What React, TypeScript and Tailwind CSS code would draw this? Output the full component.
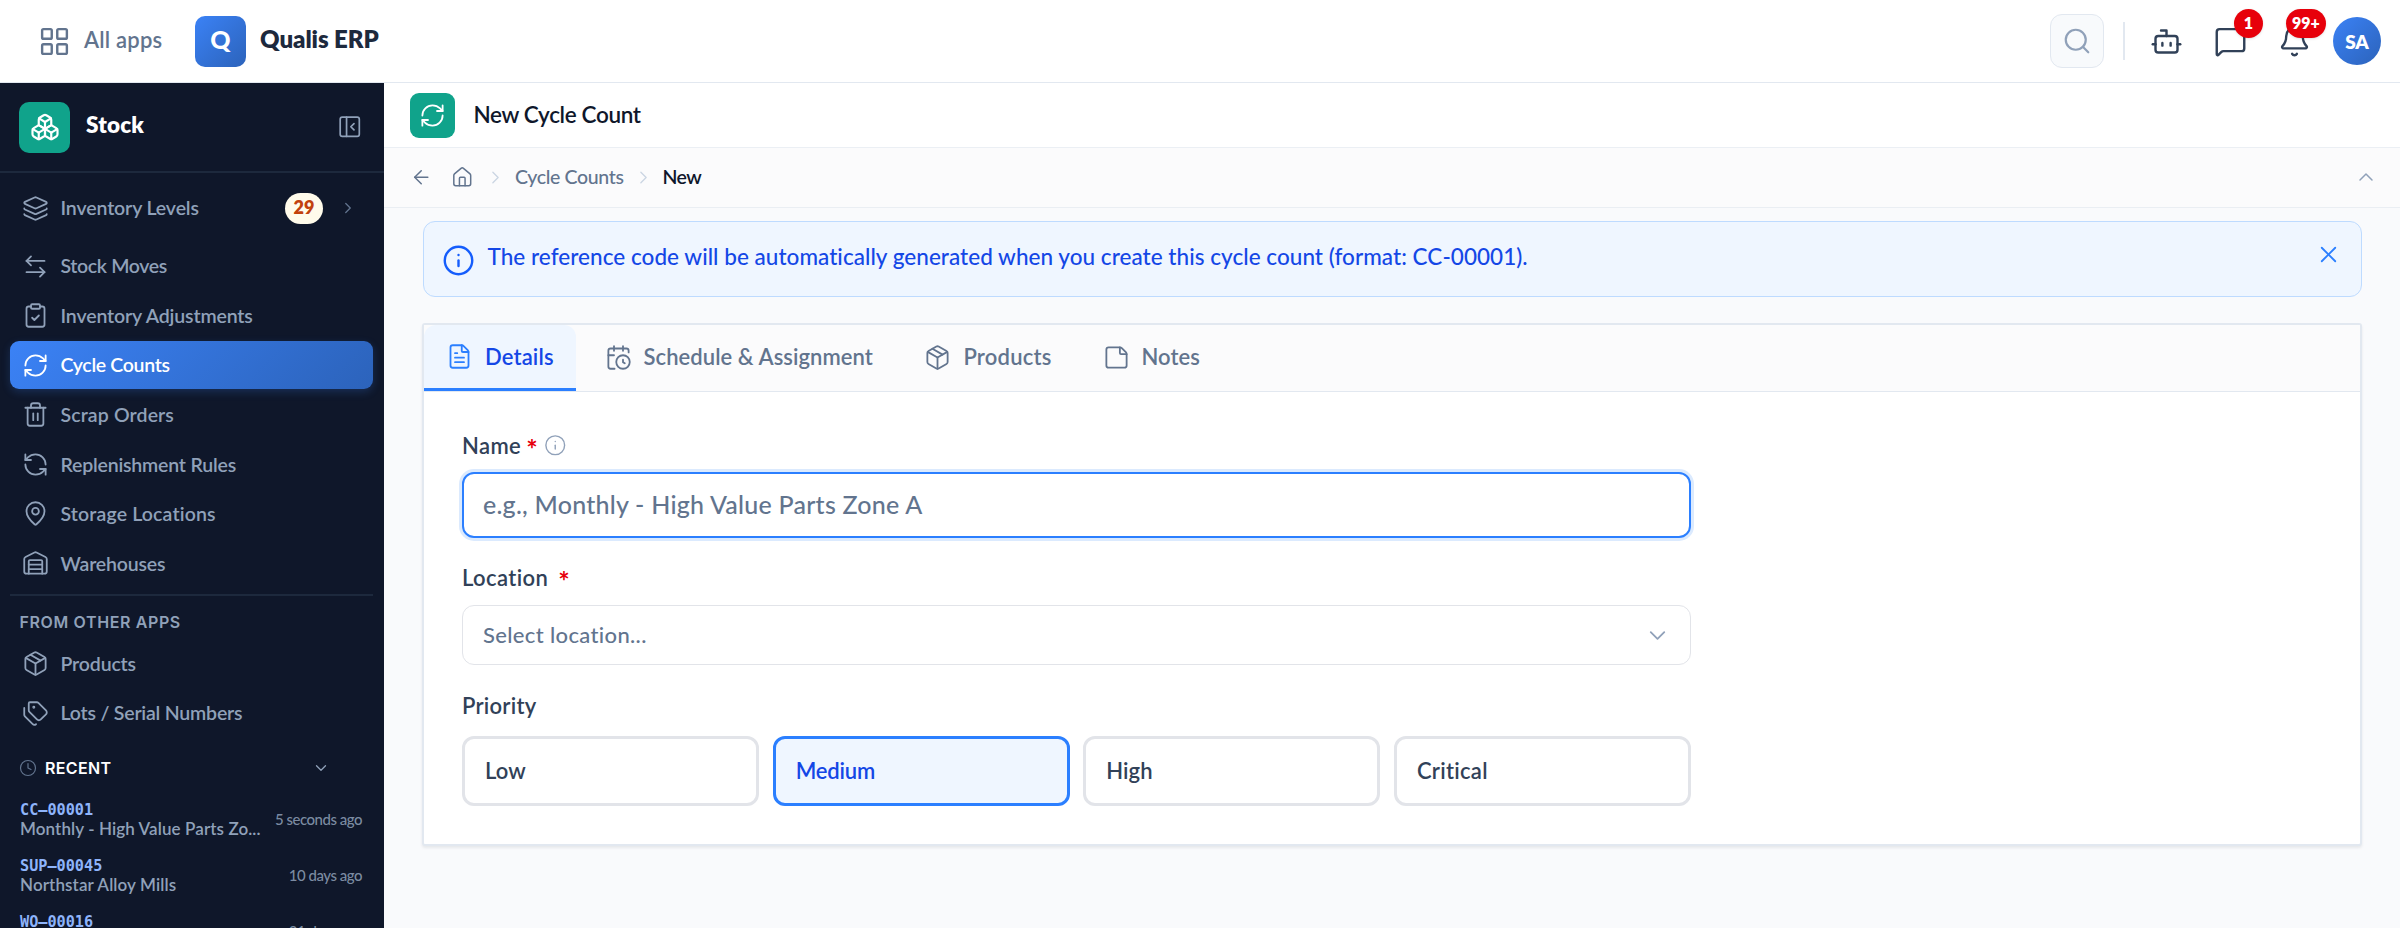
import type { ReactNode } from "react";
import {
  ArrowLeft, ArrowLeftRight, Bell, Bot, Boxes, CalendarClock, ChevronDown, ChevronRight, ChevronUp,
  ClipboardCheck, Clock, FileText, House, Info, Layers, LayoutGrid, MapPin, MessageSquare, Package,
  PanelLeftClose, RefreshCcw, RefreshCw, Search, StickyNote, Tags, Trash2, Warehouse, X,
  type LucideIcon,
} from "lucide-react";

type NavEntry = { icon: LucideIcon; label: string; tracking: string; active?: boolean };

const mainNav: NavEntry[] = [
  { icon: ArrowLeftRight, label: "Stock Moves", tracking: "tracking-[-0.35px]" },
  { icon: ClipboardCheck, label: "Inventory Adjustments", tracking: "tracking-[-0.14px]" },
  { icon: RefreshCw, label: "Cycle Counts", tracking: "tracking-[-0.33px]", active: true },
  { icon: Trash2, label: "Scrap Orders", tracking: "tracking-[0.12px]" },
  { icon: RefreshCcw, label: "Replenishment Rules", tracking: "tracking-[-0.2px]" },
  { icon: MapPin, label: "Storage Locations", tracking: "tracking-[0.15px]" },
  { icon: Warehouse, label: "Warehouses", tracking: "tracking-[-0.18px]" },
];

const otherNav: NavEntry[] = [
  { icon: Package, label: "Products", tracking: "tracking-[-0.15px]" },
  { icon: Tags, label: "Lots / Serial Numbers", tracking: "tracking-[-0.2px]" },
];

const recent = [
  { code: "CC–00001", name: "Monthly - High Value Parts Zo...", time: "5 seconds ago", tracking: "tracking-[0.1px]" },
  { code: "SUP–00045", name: "Northstar Alloy Mills", time: "10 days ago", tracking: "tracking-[0.11px]" },
  { code: "WO–00016", time: "21 days ago" },
];

const priorities = [
  { label: "Low", tracking: "tracking-[0.1px]" },
  { label: "Medium", tracking: "tracking-[-0.15px]", active: true },
  { label: "High", tracking: "tracking-[0.1px]" },
  { label: "Critical", tracking: "tracking-[0.3px]" },
];

function NavItem({ icon: Icon, label, tracking, active }: NavEntry) {
  return (
    <a
      className={
        active
          ? "flex h-12 items-center gap-3 rounded-[9px] bg-linear-135 from-[#3b82f6] to-[#2c63bb] pl-3 text-white shadow-[0_3px_9px_rgba(59,130,246,0.22)]"
          : "flex h-12 items-center gap-3 rounded-[9px] pl-3 text-slate-400"
      }
    >
      <Icon size={27} strokeWidth={1.6} />
      <span className={`text-[19.5px] leading-none font-semibold ${tracking}`}>{label}</span>
    </a>
  );
}

function Badge({ children, place }: { children: ReactNode; place: string }) {
  return (
    <span
      className={`absolute flex h-[29px] min-w-[29px] items-center justify-center rounded-full bg-[#e7000b] px-1.5 pb-px text-[16px] leading-none font-extrabold text-white shadow-sm ${place}`}
    >
      {children}
    </span>
  );
}

function TopBar() {
  return (
    <header className="flex h-[83px] shrink-0 items-center justify-between border-b border-slate-200 bg-white pr-[19px] pl-[38px]">
      <div className="flex items-center">
        <LayoutGrid size={33} strokeWidth={1.75} className="text-slate-500" />
        <span className="ml-[13px] w-[111px] pb-0.5 text-[22px] leading-none font-semibold tracking-[0.2px] text-slate-500">All apps</span>
        <div className="flex size-[51px] items-center justify-center rounded-[10px] bg-linear-135 from-[#3b82f6] to-[#2c63bb] pb-1 text-[25px] leading-none font-black text-white">
          Q
        </div>
        <span className="ml-[14px] pb-1 text-[24px] leading-none font-extrabold tracking-[-0.05px] text-slate-800">Qualis ERP</span>
      </div>
      <div className="flex items-center text-slate-700">
        <button className="flex size-[54px] items-center justify-center rounded-xl border-[1.5px] border-slate-200 bg-slate-50 text-slate-400">
          <Search size={30} strokeWidth={1.75} />
        </button>
        <div className="mr-[25px] ml-[19px] h-[38px] w-[2px] bg-slate-200" />
        <Bot size={33} strokeWidth={1.75} />
        <div className="relative ml-[31px]">
          <MessageSquare size={33} strokeWidth={1.75} />
          <Badge place="-top-[16px] left-[20px]">1</Badge>
        </div>
        <div className="relative ml-[31px]">
          <Bell size={33} strokeWidth={1.75} />
          <Badge place="-top-[16px] left-[8px]">99+</Badge>
        </div>
        <div className="ml-[22px] flex size-12 items-center justify-center rounded-full bg-linear-135 from-[#3b82f6] to-[#2c63bb] text-[19px] leading-none font-extrabold tracking-[-0.17px] text-white">
          SA
        </div>
      </div>
    </header>
  );
}

function Sidebar() {
  return (
    <aside className="flex w-96 shrink-0 flex-col overflow-hidden bg-[#0f172a]">
      <div className="flex h-[90px] shrink-0 items-center border-b-2 border-slate-800 pr-[22px] pl-[19px]">
        <div className="flex size-[51px] items-center justify-center rounded-[10px] bg-[#10a38b] text-white">
          <Boxes size={30} strokeWidth={1.75} />
        </div>
        <span className="ml-[16px] grow pb-[3px] text-[22.5px] leading-none font-extrabold tracking-[0.2px] text-white">Stock</span>
        <PanelLeftClose size={25.5} strokeWidth={1.6} className="text-slate-400" />
      </div>
      <nav className="flex flex-col pt-[11px] pr-[11px] pl-[9.5px]">
        <div className="mb-[10px] flex h-12 items-center pr-4 pl-3 text-slate-400">
          <Layers size={27} strokeWidth={1.6} />
          <span className="ml-3 grow text-[19.5px] leading-none font-semibold tracking-[-0.12px]">Inventory Levels</span>
          <span className="mr-[16px] flex h-[31px] w-[38px] items-center justify-center rounded-full bg-[#fffbeb] pb-0.5 text-[18px] leading-none font-extrabold text-[#c2410c]">
            29
          </span>
          <ChevronRight size={18} strokeWidth={1.75} className="text-slate-500" />
        </div>
        <div className="flex flex-col gap-[1.6px]">
          {mainNav.map((n) => <NavItem key={n.label} {...n} />)}
        </div>
        <div className="mt-[6px] h-[2px] bg-slate-800" />
        <div className="mt-[17px] mb-[8px] pl-[10px] font-[Inter,sans-serif] text-[16px] leading-[19px] font-semibold tracking-[0.62px] text-slate-400">
          FROM OTHER APPS
        </div>
        <div className="flex flex-col gap-[1.6px]">
          {otherNav.map((n) => <NavItem key={n.label} {...n} />)}
        </div>
      </nav>
      <div className="mt-[19px] flex h-[24px] shrink-0 items-center pr-[54px] pl-[19px]">
        <Clock size={18} strokeWidth={1.6} className="text-slate-500" />
        <span className="ml-[8px] grow font-[Inter,sans-serif] text-[16px] leading-none font-semibold tracking-[0.35px] text-white">RECENT</span>
        <ChevronDown size={18} strokeWidth={1.75} className="text-slate-400" />
      </div>
      <div className="mt-[21px] flex flex-col gap-[18px] pr-[22px] pl-[20px]">
        {recent.map((r) => (
          <div key={r.code} className="flex h-[38px] shrink-0 items-center justify-between">
            <div className="flex h-full flex-col">
              <span className="font-['DejaVu_Sans_Mono',monospace] text-[15.2px] leading-[19px] font-bold text-[#8eb4fb]">{r.code}</span>
              {r.name && (
                <span className={`text-[17px] leading-[18px] font-semibold whitespace-nowrap text-slate-400 ${r.tracking}`}>{r.name}</span>
              )}
            </div>
            <span className="pb-px text-[15px] leading-none font-medium tracking-[-0.49px] whitespace-nowrap text-slate-400/85">{r.time}</span>
          </div>
        ))}
      </div>
    </aside>
  );
}

function Tab({ icon: Icon, label, style }: { icon: LucideIcon; label: string; style: string }) {
  return (
    <div className={`flex items-center gap-[12px] pb-0.5 text-slate-500 ${style}`}>
      <Icon size={27} strokeWidth={1.6} />
      <span className="text-[22px] leading-none font-semibold">{label}</span>
    </div>
  );
}

function FormCard() {
  return (
    <section className="mt-[26px] mr-[38.5px] ml-[38px] h-[523px] rounded-[3px] border-2 border-slate-200 bg-white shadow-[0_2px_3px_rgba(15,23,42,0.08)]">
      <div className="flex h-[67px] border-b border-slate-200 bg-[#fbfbfc]">
        <div className="flex w-[152px] items-center gap-[12px] rounded-t-xl border-b-[3px] border-[#2b7fff] bg-[#eff6ff] pl-[22px] text-[#2b7fff]">
          <FileText size={27} strokeWidth={1.6} />
          <span className="text-[22px] leading-none font-semibold tracking-[0.15px] text-[#1447e6]">Details</span>
        </div>
        <Tab icon={CalendarClock} label="Schedule & Assignment" style="ml-[28.5px] tracking-[0.06px]" />
        <Tab icon={Package} label="Products" style="ml-[51.5px] tracking-[0.2px]" />
        <Tab icon={StickyNote} label="Notes" style="ml-[51px] tracking-[0.05px]" />
      </div>
      <div className="flex w-[1267px] flex-col pt-[41px] pl-[38px] text-slate-700">
        <div className="flex h-[25px] items-center">
          <span className="text-[22px] leading-none font-semibold tracking-[0.4px]">Name</span>
          <span className="ml-[5px] h-[22px] w-[12px] text-[27px] leading-[27px] font-bold text-[#e7000b]">*</span>
          <Info size={22.5} strokeWidth={1.5} className="ml-[6px] text-slate-400" />
        </div>
        <div className="mt-[14px] flex h-[66px] items-center rounded-xl border-2 border-[#2b7fff] bg-white pl-[19px] shadow-[0_0_0_3px_#dbeafe]">
          <span className="pb-0.5 text-[25px] leading-none font-medium tracking-[0.24px] text-slate-500">e.g., Monthly - High Value Parts Zone A</span>
        </div>
        <div className="mt-[28px] flex h-[24px] items-center">
          <span className="text-[22px] leading-none font-semibold tracking-[0.4px]">Location</span>
          <span className="ml-[10px] h-[22px] text-[27px] leading-[27px] font-bold text-[#e7000b]">*</span>
        </div>
        <div className="mt-[15px] flex h-[60px] items-center justify-between rounded-xl border border-[#e2e4e9] bg-white pr-[19px] pl-[20px]">
          <span className="text-[22px] leading-none font-medium tracking-[0.35px] text-slate-500">Select location...</span>
          <ChevronDown size={27} strokeWidth={1.6} className="text-slate-400" />
        </div>
        <div className="mt-[29px] flex h-[24px] items-center">
          <span className="text-[22px] leading-none font-semibold tracking-[0.25px]">Priority</span>
        </div>
        <div className="mt-[18px] grid grid-cols-4 gap-[13.5px]">
          {priorities.map((p) => (
            <button
              key={p.label}
              className={
                p.active
                  ? "flex h-[70px] items-center rounded-xl border-[3px] border-[#2b7fff] bg-[#eff6ff] pl-[20px] text-[#1447e6]"
                  : "flex h-[70px] items-center rounded-xl border-[3px] border-[#e2e4e9] bg-white pl-[20px]"
              }
            >
              <span className={`text-[22px] leading-none font-semibold ${p.tracking}`}>{p.label}</span>
            </button>
          ))}
        </div>
      </div>
    </section>
  );
}

function Content() {
  return (
    <main className="flex grow flex-col bg-[#f9fafc]">
      <div className="flex h-[65px] shrink-0 items-center border-b border-slate-200/70 bg-white pl-[25.5px]">
        <div className="flex size-[45px] items-center justify-center rounded-[9px] bg-[#10a38b] text-white">
          <RefreshCw size={27} strokeWidth={1.6} />
        </div>
        <h1 className="ml-[19px] text-[22.5px] leading-none font-semibold tracking-[-0.35px] text-slate-900">New Cycle Count</h1>
      </div>
      <div className="flex h-[60px] shrink-0 items-center border-b border-slate-200/70 bg-[#fbfbfc] pr-[22px] pb-px pl-[26px] text-slate-500">
        <ArrowLeft size={22.5} strokeWidth={1.6} />
        <House size={22.5} strokeWidth={1.6} className="ml-[18px]" />
        <ChevronRight size={21} strokeWidth={1.5} className="ml-[12px] text-slate-300" />
        <span className="ml-[9px] text-[19.5px] leading-none font-medium tracking-[-0.36px]">Cycle Counts</span>
        <ChevronRight size={21} strokeWidth={1.5} className="ml-[9px] text-slate-300" />
        <span className="ml-[9px] grow text-[19.5px] leading-none font-semibold tracking-[-0.6px] text-slate-900">New</span>
        <ChevronUp size={24} strokeWidth={1.5} className="text-slate-400" />
      </div>
      <div className="mt-[13px] mr-[38.5px] ml-[38.5px] flex h-[76px] shrink-0 items-center rounded-xl border-[1.5px] border-[#bedbff] bg-[#eff6ff] pr-[19px] pl-[18px]">
        <Info size={33} strokeWidth={1.75} className="mt-[3px] text-[#155dfc]" />
        <span className="ml-[13px] grow pb-[3px] text-[22.5px] leading-none font-medium tracking-[0.04px] text-[#1447e6]">
          The reference code will be automatically generated when you create this cycle count (format: CC-00001).
        </span>
        <X size={27} strokeWidth={1.6} className="mb-[9px] text-[#2b7fff]" />
      </div>
      <FormCard />
    </main>
  );
}

export default function App() {
  return (
    <div className="flex h-[928px] w-[2400px] flex-col overflow-hidden font-[Lato,sans-serif]">
      <TopBar />
      <div className="flex min-h-0 grow">
        <Sidebar />
        <Content />
      </div>
    </div>
  );
}
